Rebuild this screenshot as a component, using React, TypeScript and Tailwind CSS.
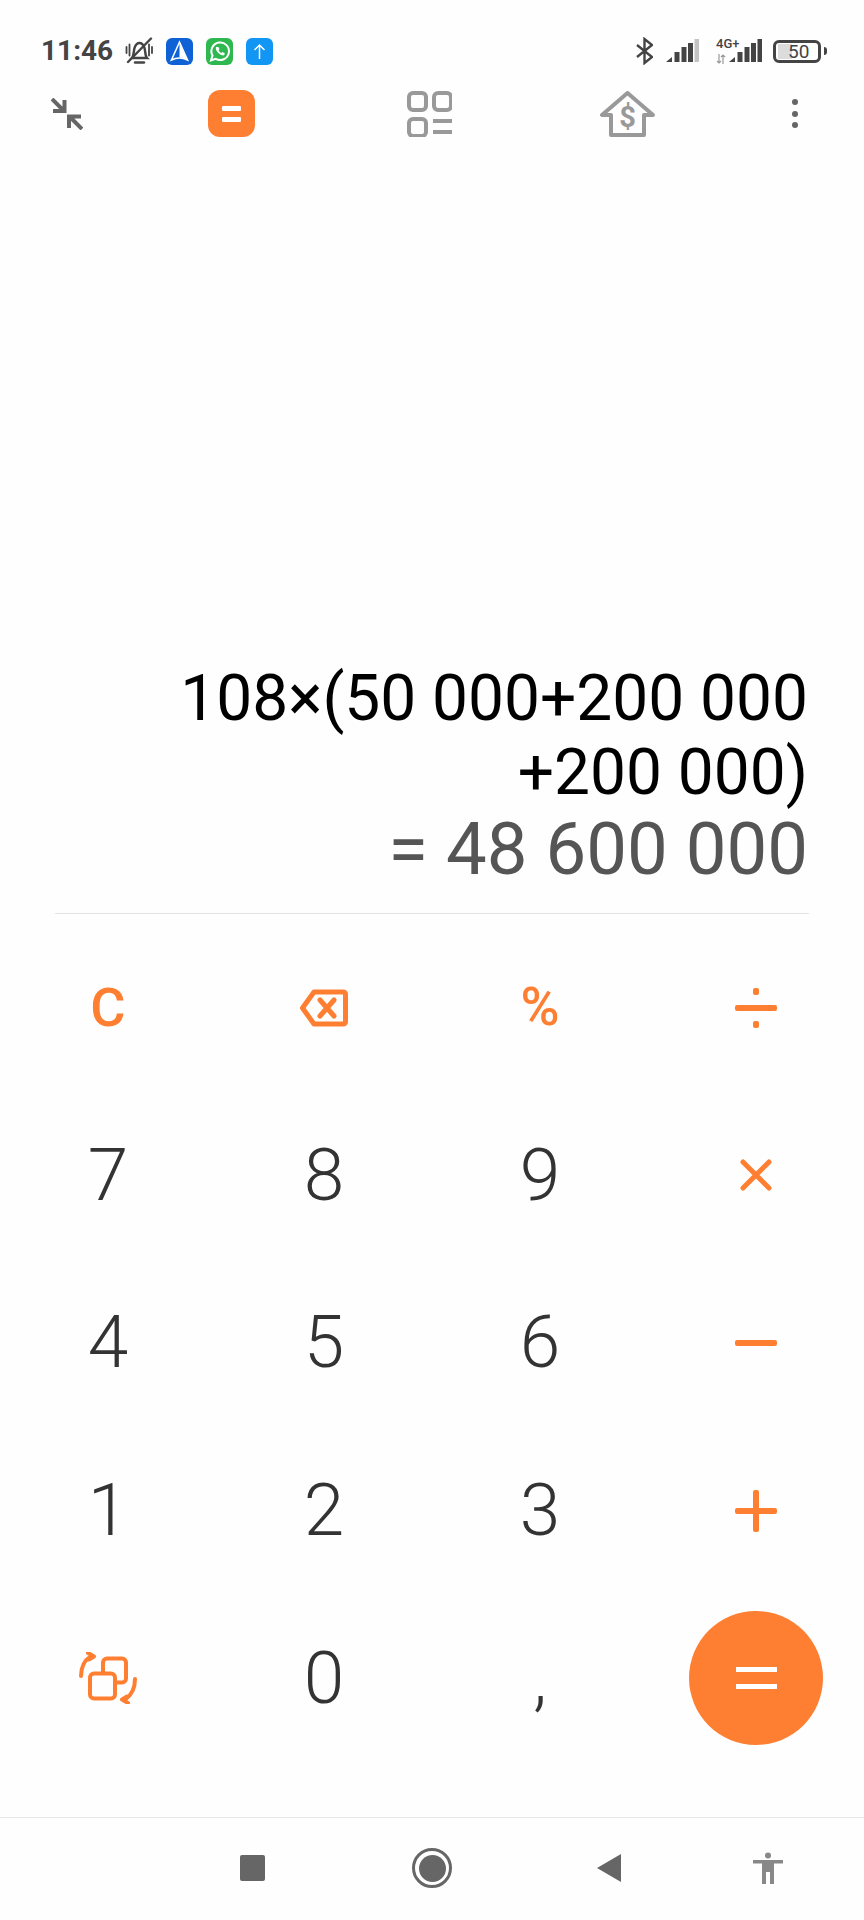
const O = "#ff7f32";

function Bell() {
  return (
    <svg width="28" height="28" viewBox="0 0 28 28" fill="none" stroke="#444" strokeWidth="2.400" strokeLinecap="round">
      <path d="M7 21c2-2 1.500-7 2.500-10 1-3 3-5 5-5s4 2 5 5c1 3 .5 8 2.500 10z" />
      <path d="M10 25.500h9" />
      <path d="M1.500 10v6M4.500 7.500v11M24 7.500v11M27 10v6" strokeWidth="1.800" />
      <path d="M3 25 26 1.500" />
    </svg>
  );
}

function Bars({ last }: { last: string }) {
  return (
    <svg width="33" height="24" viewBox="0 0 33 24">
      <path d="M0 23 6 18v5z" fill="#444" />
      <rect x="8.500" y="13" width="5" height="10" fill="#444" />
      <rect x="15.500" y="8" width="5" height="15" fill="#444" />
      <rect x="22" y="4" width="5" height="19" fill="#444" />
      <rect x="28.500" y="0" width="4.500" height="23" fill={last} />
    </svg>
  );
}

function StatusBar() {
  return (
    <div className="flex h-[65px] items-end pl-[41px]">
      <div className="flex h-[28px] items-center">
        <span className="w-[84px] text-[28px] leading-none font-bold text-[#444]">11:46</span>
        <Bell />
        <svg className="ml-[13px]" width="27" height="27" viewBox="0 0 27 27">
          <rect width="27" height="27" rx="6" fill="#0f62d6" />
          <path d="M13.500 4 5.500 22c3-1.500 5.500-2 8-2s5 .500 8 2z" fill="#0f62d6" stroke="#fff" strokeWidth="1.500" />
          <path d="M13.500 5 21 21.500c-2-1.200-5-2-7.500-2z" fill="#fff" />
        </svg>
        <svg className="ml-[13px]" width="27" height="27" viewBox="0 0 27 27">
          <rect width="27" height="27" rx="6" fill="#2fb84f" />
          <path d="M5 22.500 6.500 17.500a8.800 8.800 0 1 1 3.200 3.300z" fill="none" stroke="#fff" strokeWidth="2" />
          <path d="M10 9c-1 2.500 2 7.500 7 8.500 1 0 2-1.500 1.700-2.300l-2.300-1.200-1 1.100c-1.200-.5-2.300-1.600-2.800-2.800l.9-1-1-2.400z" fill="#fff" />
        </svg>
        <svg className="ml-[13px]" width="27" height="27" viewBox="0 0 27 27">
          <rect width="27" height="27" rx="6" fill="#1296f3" />
          <path d="M13.500 21V7M8.500 12l5-5 5 5" fill="none" stroke="#fff" strokeWidth="1.500" />
        </svg>
        <svg className="ml-[363px]" width="17" height="28" viewBox="0 0 17 28" fill="none" stroke="#444" strokeWidth="2.400">
          <path d="M1 8 16 20 8.500 26V2L16 8 1 20" />
        </svg>
        <div className="ml-[13px]"><Bars last="#c4c4c4" /></div>
        <div className="ml-[17px] flex w-[13px] flex-col items-start">
          <span className="h-[12px] text-[13px] leading-[12px] font-medium whitespace-nowrap text-[#444]">4G+</span>
          <svg className="mt-[4px]" width="10" height="10" viewBox="0 0 10 10" fill="none" stroke="#999" strokeWidth="1.200">
            <path d="M3 0v9M1 7l2 2 2-2M7 10V1M5 3l2-2 2 2" />
          </svg>
        </div>
        <div className="ml-[0px]"><Bars last="#444" /></div>
        <div className="ml-[11px] flex h-[23px] w-[48px] items-center rounded-[6px] border-[3px] border-[#444] pl-[2px]">
          <div className="flex h-[15px] w-[14px] items-center bg-[#dcdcdc]">
            <span className="ml-[10px] text-[19px] leading-none text-[#444]">50</span>
          </div>
        </div>
        <div className="ml-[3px] h-[8px] w-[3px] rounded-r-sm bg-[#444]" />
      </div>
    </div>
  );
}

function Toolbar() {
  return (
    <div className="mt-[25px] flex h-[47px] items-center pl-[51px]">
      <svg width="32" height="32" viewBox="0 0 32 32" fill="none" stroke="#666" strokeWidth="4">
        <path d="M1 1 13 13M2 13h11.500V2" />
        <path d="M31 31 19 19M18 30V18.500H30" />
      </svg>
      <div className="ml-[125px] flex h-[47px] w-[47px] flex-col items-center justify-center gap-[6px] rounded-[12px] bg-[#ff7f32]">
        <div className="h-[5px] w-[19px] rounded-[1px] bg-white" />
        <div className="h-[5px] w-[19px] rounded-[1px] bg-white" />
      </div>
      <svg className="ml-[152px]" width="45" height="46" viewBox="0 0 45 46" fill="none" stroke="#999" strokeWidth="4">
        <rect x="2" y="2" width="17" height="17" rx="4" />
        <rect x="27" y="2" width="17" height="17" rx="4" />
        <rect x="2" y="28" width="17" height="17" rx="4" />
        <path d="M26 30h19M26 41h19" />
      </svg>
      <svg className="ml-[148px]" width="55" height="46" viewBox="0 0 55 46" fill="none" stroke="#999" strokeWidth="4" strokeLinejoin="round">
        <path d="M27.500 2 2 24h9v20h33V24h9z" />
        <text x="27.500" y="36" textAnchor="middle" fontSize="29" fontWeight="700" fill="#999" stroke="none" fontFamily="Roboto, sans-serif">$</text>
      </svg>
      <div className="ml-[137px] flex flex-col gap-[5.500px]">
        <div className="h-[6px] w-[6px] rounded-full bg-[#666]" />
        <div className="h-[6px] w-[6px] rounded-full bg-[#666]" />
        <div className="h-[6px] w-[6px] rounded-full bg-[#666]" />
      </div>
    </div>
  );
}

function Display() {
  return (
    <div className="flex h-[776px] flex-col justify-end pr-[56px] text-right whitespace-nowrap">
      <div className="text-[64px] leading-[74px] text-black">108×(50 000+200 000</div>
      <div className="text-[64px] leading-[74px] text-black">+200 000)</div>
      <div className="mb-[23px] text-[72.500px] leading-[80px] text-[#555]">= 48 600 000</div>
    </div>
  );
}

function Key({ children }: { children: React.ReactNode }) {
  return <div className="flex items-center justify-center text-[73px] leading-none font-[350] text-[#333]">{children}</div>;
}

function Op({ children }: { children: React.ReactNode }) {
  return <div className="flex items-center justify-center text-[#ff7f32]">{children}</div>;
}

function Keypad() {
  return (
    <div className="mt-[10px] grid h-[838px] grid-cols-4 grid-rows-5">
      <Op><span className="text-[54px] leading-none font-medium">C</span></Op>
      <Op>
        <svg width="48" height="38" viewBox="0 0 48 38" fill="none" stroke={O} strokeWidth="5" strokeLinejoin="round" strokeLinecap="round">
          <path d="M2.500 19 14 3h29a2 2 0 0 1 2.500 2v28a2 2 0 0 1-2.500 2H14z" />
          <path d="M20 11l14 16M34 11 20 27" />
        </svg>
      </Op>
      <Op><span className="text-[53px] leading-none font-medium">%</span></Op>
      <Op>
        <svg width="42" height="42" viewBox="0 0 42 42" fill={O}>
          <rect y="18" width="42" height="6" rx="2" />
          <rect x="18" y="1" width="6" height="7" rx="2" />
          <rect x="18" y="34" width="6" height="7" rx="2" />
        </svg>
      </Op>
      <Key>7</Key>
      <Key>8</Key>
      <Key>9</Key>
      <Op>
        <svg width="32" height="32" viewBox="0 0 32 32" fill="none" stroke={O} strokeWidth="5" strokeLinecap="round">
          <path d="M3 3l26 26M29 3 3 29" />
        </svg>
      </Op>
      <Key>4</Key>
      <Key>5</Key>
      <Key>6</Key>
      <Op><div className="h-[6px] w-[42px] rounded-[2px] bg-[#ff7f32]" /></Op>
      <Key>1</Key>
      <Key>2</Key>
      <Key>3</Key>
      <Op>
        <svg width="42" height="42" viewBox="0 0 42 42" fill={O}>
          <rect y="18" width="42" height="6" rx="2" />
          <rect x="18" width="6" height="42" rx="2" />
        </svg>
      </Op>
      <Op>
        <svg width="58" height="52" viewBox="0 0 58 52" fill="none" stroke={O} strokeWidth="4" strokeLinecap="round" strokeLinejoin="round">
          <rect x="24" y="6.500" width="23" height="24" rx="4" />
          <rect x="11" y="21.500" width="25" height="25" rx="4" fill="#fefefe" />
          <path d="M2 24C2 15 6 8 11 5M9 1l6 3.500-5 3" />
          <path d="M56 27c0 9-4 16-9 20M49 51l-6-3.500 5-3" />
        </svg>
      </Op>
      <Key>0</Key>
      <Key>,</Key>
      <div className="flex items-center justify-center">
        <div className="flex h-[134px] w-[134px] flex-col items-center justify-center gap-[12px] rounded-full bg-[#ff7f32]">
          <div className="h-[5px] w-[41px] bg-white" />
          <div className="h-[5px] w-[41px] bg-white" />
        </div>
      </div>
    </div>
  );
}

function NavBar() {
  return (
    <div className="mt-[55px] flex h-[103px] items-center border-t border-[#e8e8ec] pb-[2px] pl-[240px]">
      <div className="h-[26px] w-[25px] rounded-[2px] bg-[#666]" />
      <div className="ml-[147px] flex h-[40px] w-[40px] items-center justify-center rounded-full border-[3px] border-[#666]">
        <div className="h-[27px] w-[27px] rounded-full bg-[#666]" />
      </div>
      <svg className="ml-[144px]" width="26" height="30" viewBox="0 0 26 30" fill="#666">
        <path d="M1 15 25 1v28z" />
      </svg>
      <svg className="ml-[131px]" width="30" height="32" viewBox="0 0 30 32" fill="#888">
        <circle cx="15" cy="3.500" r="3" />
        <path d="M0 8h30v3.500h-9V32h-4V20h-4v12H9V11.500H0z" />
      </svg>
    </div>
  );
}

export default function App() {
  return (
    <div className="h-[1920px] w-[864px] overflow-hidden bg-[#fefefe] font-['Roboto',sans-serif]">
      <StatusBar />
      <Toolbar />
      <Display />
      <div className="mx-[55px] h-px bg-[#e4e4e4]" />
      <Keypad />
      <NavBar />
    </div>
  );
}
